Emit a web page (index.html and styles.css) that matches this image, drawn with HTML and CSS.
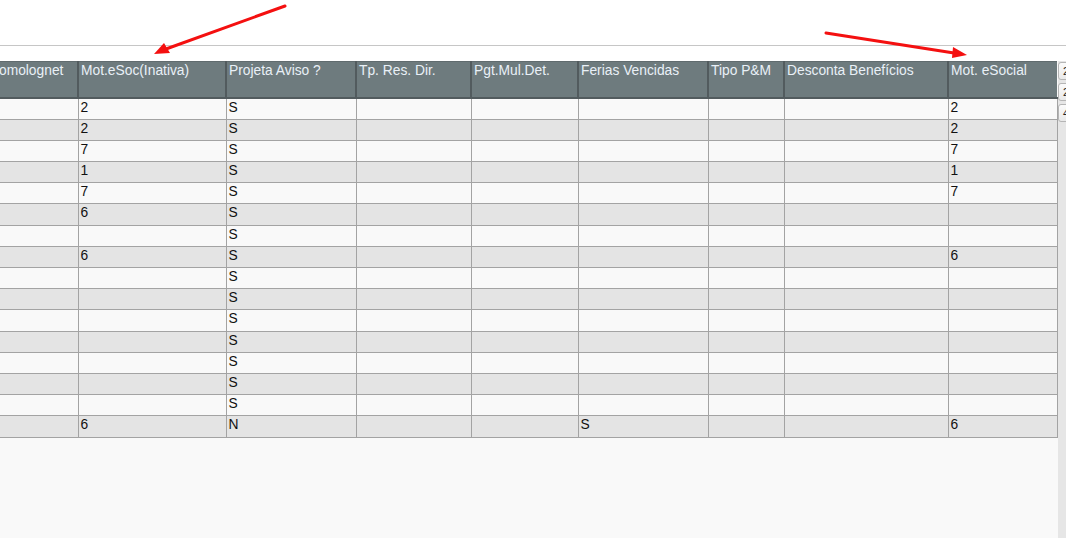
FILE: index.html
```html
<!DOCTYPE html>
<html lang="pt-BR">
<head>
    <meta charset="UTF-8">
    <title>Rescisão</title>
    <link rel="stylesheet" href="styles.css">
</head>
<body>
<div class="topBar"></div>
<div class="gap"></div>
<div class="gridArea">
    <div class="gridView">
        <table class="grid">
            <colgroup>
                <col style="width: 92px">
                <col style="width: 148px">
                <col style="width: 130px">
                <col style="width: 115px">
                <col style="width: 107px">
                <col style="width: 130px">
                <col style="width: 76px">
                <col style="width: 164px">
                <col style="width: 109px">
            </colgroup>
            <thead>
            <tr>
                <th>Homolognet</th>
                <th>Mot.eSoc(Inativa)</th>
                <th>Projeta Aviso ?</th>
                <th>Tp. Res. Dir.</th>
                <th>Pgt.Mul.Det.</th>
                <th>Ferias Vencidas</th>
                <th>Tipo P&amp;M</th>
                <th>Desconta Benefícios</th>
                <th>Mot. eSocial</th>
            </tr>
            </thead>
            <tbody id="gridBody"></tbody>
        </table>
    </div>
    <div class="sideBar">
        <button type="button" class="sideBtn">2</button>
        <button type="button" class="sideBtn">2</button>
        <button type="button" class="sideBtn">4</button>
    </div>
</div>
<svg class="arrows" width="1066" height="70" viewBox="0 0 1066 70">
    <line x1="285" y1="6" x2="166" y2="49" stroke="#f41010" stroke-width="3" stroke-linecap="round"/>
    <polygon points="154,54 164,43 170,53" fill="#f41010"/>
    <line x1="826" y1="33" x2="954" y2="53" stroke="#f41010" stroke-width="3" stroke-linecap="round"/>
    <polygon points="967,55 953,47 952,58" fill="#f41010"/>
</svg>
<script>
    let rows = [
        ["2", "S", "", "2"],
        ["2", "S", "", "2"],
        ["7", "S", "", "7"],
        ["1", "S", "", "1"],
        ["7", "S", "", "7"],
        ["6", "S", "", ""],
        ["", "S", "", ""],
        ["6", "S", "", "6"],
        ["", "S", "", ""],
        ["", "S", "", ""],
        ["", "S", "", ""],
        ["", "S", "", ""],
        ["", "S", "", ""],
        ["", "S", "", ""],
        ["", "S", "", ""],
        ["6", "N", "S", "6"]
    ];
    let html = "";
    for (let i = 0; i < rows.length; i++) {
        let r = rows[i];
        html += "<tr class='" + (i % 2 == 0 ? "odd" : "even") + "'>";
        html += "<td></td><td>" + r[0] + "</td><td>" + r[1] + "</td><td></td><td></td>";
        html += "<td>" + r[2] + "</td><td></td><td></td><td>" + r[3] + "</td></tr>";
    }
    document.getElementById("gridBody").innerHTML = html;
</script>
</body>
</html>
```
FILE: styles.css
```css
body {
    margin: 0;
    background-color: white;
    font-family: "Liberation Sans", Arial, sans-serif;
    font-size: 13.8px;
    height: 538px;
    overflow: hidden;
    display: flex;
    flex-direction: column;
}

.topBar {
    height: 45px;
    border-bottom: 1px solid #c6c6c6;
    flex: none;
}

.gap {
    height: 15px;
    flex: none;
}

.gridArea {
    flex: 1;
    display: flex;
    background-color: #f9f9f9;
}

.gridView {
    width: 1058px;
    overflow: hidden;
}

.grid {
    table-layout: fixed;
    border-collapse: collapse;
    width: 1071px;
    margin-left: -15px;
}

.grid th {
    height: 36px;
    box-sizing: border-box;
    background-color: #6e7b7e;
    color: #e9f0f7;
    font-weight: normal;
    text-align: left;
    vertical-align: top;
    padding: 1px 2px 0;
    line-height: 16px;
    border-left: 2px solid #525b5e;
    border-bottom: 2px solid #525b5e;
    border-top: 1px solid #606b6e;
    white-space: nowrap;
    overflow: hidden;
}

.grid td {
    height: 19.2px;
    padding: 1px 2px 0;
    border: 1px solid #a3a3a3;
    color: #111;
    line-height: 15px;
    vertical-align: top;
    white-space: nowrap;
    overflow: hidden;
}

.odd td {
    background-color: #f9f9f9;
}

.even td {
    background-color: #e4e4e4;
}

.sideBar {
    width: 8px;
    margin-left: auto;
    background-color: #e6e6e6;
    display: flex;
    flex-direction: column;
    gap: 3px;
    padding-top: 1px;
    overflow: hidden;
}

.sideBtn {
    width: 20px;
    height: 18px;
    padding: 0 0 0 4px;
    text-align: left;
    border: 1px solid #b5b5b5;
    border-radius: 3px;
    background: linear-gradient(#fbfbfb, #e9e9e9);
    font-family: "Liberation Sans", Arial, sans-serif;
    font-size: 11px;
    color: #222;
}

.arrows {
    position: absolute;
    left: 0;
    top: 0;
}
```
